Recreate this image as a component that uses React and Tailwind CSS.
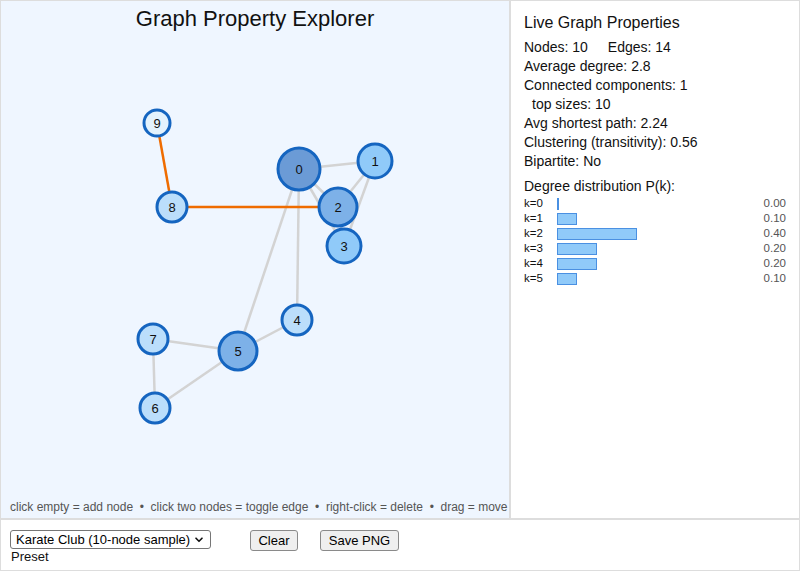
import React from "react";

const nodes = [
  { id: 0, x: 299, y: 169 },
  { id: 1, x: 375, y: 161 },
  { id: 2, x: 338, y: 207 },
  { id: 3, x: 344, y: 246 },
  { id: 4, x: 297, y: 320 },
  { id: 5, x: 238, y: 351 },
  { id: 6, x: 155, y: 408 },
  { id: 7, x: 153, y: 339 },
  { id: 8, x: 172, y: 207 },
  { id: 9, x: 157, y: 123 },
];

const edges = [
  [0, 1], [0, 2], [0, 3], [1, 2], [1, 3], [2, 3], [0, 4], [0, 5],
  [4, 5], [5, 6], [5, 7], [6, 7], [2, 8], [8, 9],
];
const bridges = new Set(["2-8", "8-9"]);

const fills = { 1: "#e3f2fd", 2: "#bbdefb", 3: "#90caf9", 4: "#7db1e8", 5: "#6b9bd6" };

const degree = {};
nodes.forEach((n) => (degree[n.id] = 0));
edges.forEach(([a, b]) => {
  degree[a]++;
  degree[b]++;
});

const dist = [
  { k: 0, p: 0 },
  { k: 1, p: 0.1 },
  { k: 2, p: 0.4 },
  { k: 3, p: 0.2 },
  { k: 4, p: 0.2 },
  { k: 5, p: 0.1 },
];

function Graph() {
  return (
    <svg className="absolute left-0 top-0" width="508" height="517" viewBox="1 1 508 517">
      {edges.map(([a, b]) => {
        const A = nodes[a];
        const B = nodes[b];
        const br = bridges.has(`${a}-${b}`);
        return (
          <line
            key={`${a}-${b}`}
            x1={A.x}
            y1={A.y}
            x2={B.x}
            y2={B.y}
            stroke={br ? "#ef6c00" : "#d3d3d3"}
            strokeWidth="2.5"
          />
        );
      })}
      {nodes.map((n) => {
        const d = degree[n.id];
        const r = 11 + 2 * d;
        return (
          <g key={n.id}>
            <circle cx={n.x} cy={n.y} r={r} fill={fills[d]} stroke="#1565c0" strokeWidth="3" />
            <text
              x={n.x}
              y={n.y + 4.5}
              textAnchor="middle"
              fontSize="13"
              fontFamily="'Liberation Sans', Arial, sans-serif"
              fill="#111"
            >
              {n.id}
            </text>
          </g>
        );
      })}
    </svg>
  );
}

export default function App() {
  return (
    <div className="w-[800px] h-[572px] bg-white text-[#111] font-['Liberation_Sans',Arial,sans-serif] flex flex-col">
      <div className="h-[519px] flex">
        <div className="relative w-[510px] h-full bg-[#eff6ff] border border-[#dddddd] flex flex-col justify-between">
          <Graph />
          <div className="relative text-center text-[22px] leading-[26px] pt-[5px]">Graph Property Explorer</div>
          <div className="relative whitespace-pre text-[12px] leading-[14px] text-[#555] pl-[9px] pb-[4px]">
            {"click empty = add node  \u2022  click two nodes = toggle edge  \u2022  right-click = delete  \u2022  drag = move"}
          </div>
        </div>
        <div className="flex-1 h-full border border-[#dddddd] pt-[12px] pl-[13px] pr-[13px]">
          <div className="text-[16px] leading-[20px] mb-[5px]">Live Graph Properties</div>
          <div className="text-[14px] leading-[19px]">
            <div>
              Nodes: 10<span className="ml-[20px]">Edges: 14</span>
            </div>
            <div>Average degree: 2.8</div>
            <div>Connected components: 1</div>
            <div className="pl-[8px]">top sizes: 10</div>
            <div>Avg shortest path: 2.24</div>
            <div>Clustering (transitivity): 0.56</div>
            <div>Bipartite: No</div>
            <div className="mt-[6px]">Degree distribution P(k):</div>
          </div>
          <div className="text-[11.5px] leading-[15px]">
            {dist.map((r) => (
              <div key={r.k} className="flex items-center h-[15px]">
                <div className="w-[33px]">k={r.k}</div>
                <div className="flex-1 flex items-center">
                  <div
                    className="h-[12px] bg-[#90caf9] border border-[#4a90e2]"
                    style={{ width: `${r.p * 200}px` }}
                  />
                </div>
                <div className="text-[#555]">{r.p.toFixed(2)}</div>
              </div>
            ))}
          </div>
        </div>
      </div>
      <div className="h-[52px] border border-[#dddddd] flex items-start pt-[10px] pl-[9px]">
        <div className="flex flex-col">
          <div className="relative w-[201px] h-[19px]">
            <select
              className="appearance-none block w-full h-[19px] bg-white border border-[#767676] rounded-[3px] pl-[5px] pr-[20px] py-0 text-[13px] leading-[17px] text-black"
              defaultValue="karate"
            >
              <option value="karate">Karate Club (10-node sample)</option>
            </select>
            <svg className="absolute right-[8px] top-[7px] pointer-events-none" width="8" height="6" viewBox="0 0 8 6">
              <path d="M1 1.2 L4 4.3 L7 1.2" fill="none" stroke="#111" strokeWidth="1.6" strokeLinecap="round" strokeLinejoin="round" />
            </svg>
          </div>
          <div className="text-[13px] leading-[15px] pl-[1px]">Preset</div>
        </div>
        <button className="ml-[39px] w-[48px] h-[21px] bg-[#efefef] border border-[#8a8a8a] rounded-[3px] text-[13px] leading-[19px] text-black">
          Clear
        </button>
        <button className="ml-[22px] w-[79px] h-[21px] bg-[#efefef] border border-[#8a8a8a] rounded-[3px] text-[13px] leading-[19px] text-black">
          Save PNG
        </button>
      </div>
    </div>
  );
}
